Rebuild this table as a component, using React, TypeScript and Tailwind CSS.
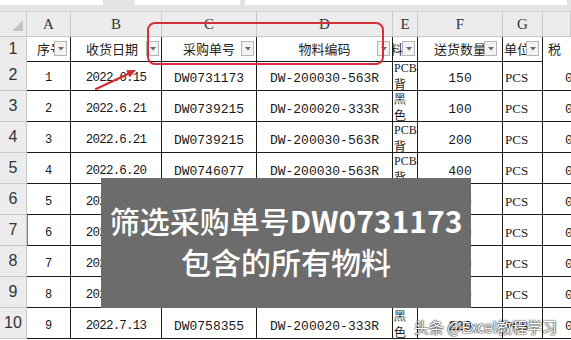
import React from 'react';

const GRID = 'grid grid-cols-[27px_44px_91px_95px_136px_25px_85px_40px_1fr]';
const CJK = 'font-["Noto_Sans_CJK_SC",sans-serif]';
const MONO = 'font-["Liberation_Mono","Noto_Sans_CJK_SC",monospace]';

interface Row {
  n: number;
  seq: string;
  date: string;
  po: string;
  code: string;
  e: [string, string];
  qty: string;
}

const rows: Row[] = [
  { n: 2, seq: '1', date: '2022.6.15', po: 'DW0731173', code: 'DW-200030-563R', e: ['PCB', '背'], qty: '150' },
  { n: 3, seq: '2', date: '2022.6.21', po: 'DW0739215', code: 'DW-200020-333R', e: ['黑', '色'], qty: '100' },
  { n: 4, seq: '3', date: '2022.6.21', po: 'DW0739215', code: 'DW-200030-563R', e: ['PCB', '背'], qty: '200' },
  { n: 5, seq: '4', date: '2022.6.20', po: 'DW0746077', code: 'DW-200030-563R', e: ['PCB', '背'], qty: '400' },
  { n: 6, seq: '5', date: '2022.6.28', po: 'DW0746077', code: 'DW-200020-333R', e: ['黑', '色'], qty: '300' },
  { n: 7, seq: '6', date: '2022.7.02', po: 'DW0750118', code: 'DW-200030-563R', e: ['PCB', '背'], qty: '250' },
  { n: 8, seq: '7', date: '2022.7.05', po: 'DW0750118', code: 'DW-200020-333R', e: ['黑', '色'], qty: '120' },
  { n: 9, seq: '8', date: '2022.7.09', po: 'DW0731173', code: 'DW-200020-333R', e: ['黑', '色'], qty: '180' },
  { n: 10, seq: '9', date: '2022.7.13', po: 'DW0758355', code: 'DW-200020-333R', e: ['黑', '色'], qty: '220' },
];

const FilterBtn: React.FC<{ right?: string }> = ({ right = 'right-[2px]' }) => (
  <span
    className={`absolute ${right} top-[4px] w-[13px] h-[15px] bg-[#f3f3f3] border border-[#b5b5b5] flex items-center justify-center`}
  >
    <svg width="6" height="4" viewBox="0 0 6 4">
      <path d="M0 0 L6 0 L3 3.5 Z" fill="#6a6a6a" />
    </svg>
  </span>
);

const App: React.FC = () => {
  const letters = ['A', 'B', 'C', 'D', 'E', 'F', 'G', ''];
  const dataCell = 'border-r border-b border-[#1c1c1c] bg-white overflow-hidden';

  return (
    <div className="relative w-[571px] h-[340px] overflow-hidden bg-white select-none">
      {/* formula bar strip */}
      <div className="h-[12px] bg-[#e4e4e4] border-b border-[#d2d2d2] flex gap-[32px]">
        <div className="w-[103px] h-[5px] bg-white" />
        <div className="flex gap-[5px]">
          <div className="w-[105px] h-[5px] bg-white" />
          <div className="w-[322px] h-[5px] bg-white" />
        </div>
      </div>

      {/* column letters */}
      <div className={`${GRID} h-[25px]`}>
        <div className="relative bg-[#ececec] border-r border-b border-[#c9c9c9]">
          <svg className="absolute right-[3px] bottom-[5px]" width="11" height="11" viewBox="0 0 11 11">
            <path d="M11 0 L11 11 L0 11 Z" fill="#c4c4c4" />
          </svg>
        </div>
        {letters.map((l, i) => (
          <div
            key={i}
            className='bg-[#ececec] border-r border-b border-[#c9c9c9] flex items-center justify-center text-[15px] text-[#333] font-["Liberation_Serif",serif]'
          >
            {l}
          </div>
        ))}
      </div>

      {/* header row 1 */}
      <div className={`${GRID} h-[23px] text-[13px] text-[#222] ${CJK}`}>
        <div className="bg-[#ececec] border-r border-b border-[#c9c9c9] flex items-center justify-center text-[16px] text-[#333] font-['Liberation_Sans',sans-serif]">
          1
        </div>
        <div className={`${dataCell} relative flex items-center pl-[10px] whitespace-nowrap`}>
          序号
          <FilterBtn right="right-[3px]" />
        </div>
        <div className={`${dataCell} relative flex items-center justify-center pr-[8px]`}>
          收货日期
          <FilterBtn />
        </div>
        <div className={`${dataCell} relative flex items-center justify-center`}>
          采购单号
          <FilterBtn />
        </div>
        <div className={`${dataCell} relative flex items-center justify-center`}>
          物料编码
          <FilterBtn />
        </div>
        <div className={`${dataCell} relative flex items-center`}>
          <span className="-ml-[3px]">料</span>
          <FilterBtn />
        </div>
        <div className={`${dataCell} relative flex items-center justify-center whitespace-nowrap`}>
          送货数量
          <FilterBtn right="right-[5px]" />
        </div>
        <div className={`${dataCell} relative flex items-center pl-[1px] whitespace-nowrap`}>
          单位
          <FilterBtn right="right-[3px]" />
        </div>
        <div className="bg-white border-b border-[#1c1c1c] flex items-center pl-[5px]">税</div>
      </div>

      {/* data rows */}
      {rows.map(r => (
        <div key={r.n} className={`${GRID} h-[31px] text-[#1a1a1a]`}>
          <div className="bg-[#ececec] border-r border-b border-[#c9c9c9] flex items-center justify-center text-[16px] text-[#333] font-['Liberation_Sans',sans-serif]">
            {r.n}
          </div>
          <div
            className={`${dataCell} flex items-end justify-center pb-[3px] text-[12px] ${MONO} ${
              r.n === 7 ? 'shadow-[inset_1px_0_0_#3fa37c]' : ''
            }`}
          >
            {r.seq}
          </div>
          <div className={`${dataCell} flex items-end justify-center pb-[2px] text-[12.5px] tracking-[-0.8px] ${MONO}`}>
            {r.date}
          </div>
          <div className={`${dataCell} flex items-end justify-center pb-[2px] text-[13px] ${MONO}`}>{r.po}</div>
          <div className={`${dataCell} flex items-end justify-center pb-[2px] text-[13px] ${MONO}`}>{r.code}</div>
          <div className={`${dataCell} flex flex-col pl-[1px] pt-[1px] text-[12px] leading-[15px] ${CJK}`}>
            <span className="font-['Liberation_Serif',serif]">{r.e[0]}</span>
            <span>{r.e[1]}</span>
          </div>
          <div className={`${dataCell} flex items-end justify-center pb-[2px] text-[13px] ${MONO}`}>{r.qty}</div>
          <div className={`${dataCell} flex items-end pl-[2px] pb-[3px] text-[13px] font-['Liberation_Serif',serif]`}>
            PCS
          </div>
          <div className="bg-white border-b border-[#1c1c1c] flex items-end pl-[22px] pb-[2px] text-[13px] font-['Liberation_Mono',monospace] overflow-hidden">
            0
          </div>
        </div>
      ))}

      {/* red highlight box */}
      <div className="absolute left-[147px] top-[22px] w-[237px] h-[43px] border-2 border-[#d3303a] rounded-[8px]" />

      {/* red arrow */}
      <svg className="absolute left-[90px] top-[62px]" width="52" height="34" viewBox="0 0 52 34">
        <line x1="6" y1="27" x2="39" y2="11.5" stroke="#d42a32" strokeWidth="2.2" strokeLinecap="round" />
        <polygon points="46,8 39.6,15.5 36.2,8.3" fill="#d42a32" />
      </svg>

      {/* caption overlay */}
      <div
        className={`absolute left-[101px] top-[178px] w-[370px] h-[130px] bg-[#6c6c6c] flex flex-col items-center justify-center pb-[4px] text-white font-medium ${CJK}`}
      >
        <div className="text-[30px] leading-[41px] whitespace-nowrap">
          筛选采购单号<span className="font-semibold">DW0731173</span>
        </div>
        <div className="text-[30px] leading-[41px]">包含的所有物料</div>
      </div>

      {/* watermark */}
      <div
        className={`absolute left-[414px] top-[316px] text-[15px] text-white whitespace-nowrap ${CJK} [text-shadow:0_0_2px_#000,0_0_1px_#000]`}
      >
        头条 @Excel教程学习
      </div>
    </div>
  );
};

export default App;
